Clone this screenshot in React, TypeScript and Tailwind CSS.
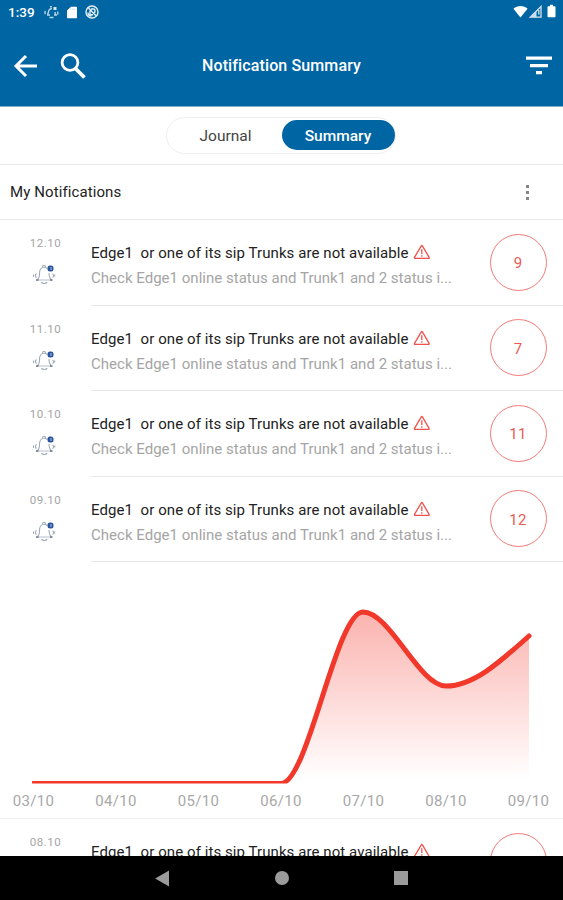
import React from 'react';

interface NotificationRowProps {
  date: string;
  count: string;
}

const notifications = [
  { date: '12.10', count: '9' },
  { date: '11.10', count: '7' },
  { date: '10.10', count: '11' },
  { date: '09.10', count: '12' },
];

const days = ['03/10', '04/10', '05/10', '06/10', '07/10', '08/10', '09/10'];

const BellIcon = () => (
  <svg width="24" height="22" viewBox="0 0 24 22" fill="none" stroke="#a3acba" strokeWidth="1.1">
    <path d="M5.500 16.500c1.800-1.300 2-2.500 2-6 0-4 2-6.200 4.500-6.200 1.500 0 2.500.5 3.200 1.300M17 10c0 3.500.2 5 2.300 6.500" />
    <path d="M10.500 4c0-2.300 3-2.300 3 0" />
    <path d="M5 17h15" strokeWidth="0.800" />
    <path d="M4 17h2.500M18 17h2.500" stroke="#65758e" strokeWidth="1.500" />
    <path d="M9.500 19c.5 2 5 2 5.500 0" strokeWidth="1.200" />
    <path d="M4.500 10.500c-1.500 1-1.500 3 0 4M1.500 11.500v2.500M20.500 11c1.500 1 1.500 2.500 0 3.500M22.700 11.500v2" />
    <rect x="15.500" y="2.500" width="6" height="6" rx="2.500" fill="#2a569f" stroke="none" />
    <path d="M19 4v3" stroke="#b9cbe9" strokeWidth="0.900" />
  </svg>
);

const WarningIcon = () => (
  <svg width="18" height="16" viewBox="0 0 18 16" fill="none" stroke="#f0524b" strokeWidth="1.300" strokeLinejoin="round">
    <path d="M8.300 1.800 1.500 13.300c-.3.600 0 1 .6 1h13.400c.6 0 .9-.4.600-1L9.400 1.800c-.4-.5-.8-.5-1.100 0Z" />
    <path d="M8.800 5.300v4.700M8.800 11.300v1.400" />
  </svg>
);

const StatusBar = () => (
  <div className="flex h-6 items-center justify-between pr-[7px] pl-2">
    <div className="flex items-center">
      <span className="w-9 text-[13.5px] font-medium">1:39</span>
      <svg width="15" height="14" viewBox="0 0 15 14" fill="none" stroke="#b9d5e8" strokeWidth="1.400">
        <path d="M3.500 9.500c1-1 .8-4 2-5 .7-.7 1.500-.8 2.500-.6M11 7c0 1.500.5 2.500 1 3M3 10h3M10 10h3M5.500 12.500h4M1.500 6c-.8 1-.8 2 0 3M13.500 6.500c.6 1 .5 2 0 3" />
        <path d="M6 1.800h2" />
        <rect x="9.500" y="2" width="3" height="3" fill="#d9e8f3" stroke="none" />
      </svg>
      <svg className="ml-[7px]" width="12" height="13" viewBox="0 0 12 13">
        <path d="M5 .8h5.200c.5 0 .8.300.8.800v9.800c0 .5-.3.800-.8.800H1.800c-.5 0-.8-.3-.8-.8V4.500Z" fill="#fff" />
        <path d="M4.800 2.500v1.500M6.800 2.500v1.500M8.800 2.500v1.500" stroke="#b3cfe2" strokeWidth="0.700" />
      </svg>
      <svg className="ml-[7px]" width="14" height="14" viewBox="0 0 14 14" fill="none" stroke="#e4eff6" strokeWidth="1.400">
        <circle cx="7" cy="7" r="6" />
        <path d="M3.500 3 11 10.800M5 9.500V5.500M5 9.800h3M6 4h2.500c2 0 2 3.500.5 3.700M3 7.500c0 2 1.500 3.500 3.500 3.500" />
      </svg>
    </div>
    <div className="-mt-[2px] flex items-center">
      <svg width="15" height="13" viewBox="0 0 15 13">
        <path d="M7.500 12.500.4 3.700C4.500.2 10.500.2 14.600 3.700Z" fill="#fff" />
      </svg>
      <svg className="ml-px" width="13" height="13" viewBox="0 0 13 13">
        <path d="M12 1.500v10.600H1.300Z" fill="none" stroke="#d7e6f1" strokeWidth="1.300" />
        <path d="M7.500 5.800v6.500H1Z" fill="#c9deec" />
        <path d="M9.800 5v4.500" stroke="#d7e6f1" strokeWidth="1.300" />
      </svg>
      <svg className="ml-[5px]" width="9" height="14" viewBox="0 0 9 14">
        <path d="M3 .8h3v1.500h1.500c.6 0 1 .4 1 1v8.900c0 .6-.4 1-1 1h-6c-.6 0-1-.4-1-1V3.300c0-.6.4-1 1-1H3Z" fill="#fff" />
      </svg>
    </div>
  </div>
);

const Header = () => (
  <header className="h-[107px] shrink-0 border-b border-[#86aecb] bg-[#0065a3] text-white">
    <StatusBar />
    <div className="grid h-[83px] grid-cols-[1fr_auto_1fr] items-center">
      <div className="flex items-center pl-[13px]">
        <svg width="25" height="24" viewBox="0 0 25 24" fill="none" stroke="#fff" strokeWidth="3">
          <path d="M24 12H3M13 2 3 12l10 10" />
        </svg>
        <svg className="ml-[22px]" width="26" height="26" viewBox="0 0 26 26" fill="none" stroke="#fff">
          <circle cx="10" cy="9.500" r="7.900" strokeWidth="2.800" />
          <path d="m15.500 15.500 9 9" strokeWidth="3.800" />
        </svg>
      </div>
      <h1 className="pt-px text-base font-medium tracking-[0.12px]">Notification Summary</h1>
      <div className="flex justify-end pr-[10px]">
        <svg width="28" height="19" viewBox="0 0 28 19" fill="#fff">
          <path d="M1 .5h26v3.300H1ZM5 8h18v3.200H5ZM11 15h6v3.300h-6Z" />
        </svg>
      </div>
    </div>
  </header>
);

const NotificationRow: React.FC<NotificationRowProps> = ({ date, count }) => (
  <div className="flex h-[85.5px] shrink-0">
    <div className="flex w-[91px] flex-col items-center pt-[15px]">
      <span className="text-[11.5px] leading-4 tracking-[0.5px] text-[#a5a5a5]">{date}</span>
      <div className="mt-[12px] mr-[4px]">
        <BellIcon />
      </div>
    </div>
    <div className="flex flex-1 items-start border-b border-[#e8e8e8]">
      <div className="flex-1 pt-[21px] whitespace-nowrap">
        <div className="flex items-center gap-1">
          <span className="text-[15px] leading-6 tracking-[0.075px] whitespace-pre text-[#222]">Edge1  or one of its sip Trunks are not available</span>
          <div className="-mt-[2px]">
            <WarningIcon />
          </div>
        </div>
        <p className="text-[15px] leading-[26px] tracking-[0.02px] text-[#a5a5a5]">Check Edge1 online status and Trunk1 and 2 status i...</p>
      </div>
      <div className="mt-[13.5px] mr-[16.5px] flex size-[57px] items-center justify-center rounded-full border border-[#f37c78] text-[15px] tracking-[0.3px] text-[#ec5b56]">
        <span className="mt-[3px]">{count}</span>
      </div>
    </div>
  </div>
);

const TrendChart = () => (
  <div className="flex h-[257px] shrink-0 flex-col border-b border-[#f0f0f0]">
    <svg width="563" height="222" viewBox="0 562 563 222">
      <defs>
        <linearGradient id="trend" x1="0" y1="612" x2="0" y2="780" gradientUnits="userSpaceOnUse">
          <stop offset="0" stopColor="#f4362b" stopOpacity="0.380" />
          <stop offset="1" stopColor="#f4362b" stopOpacity="0" />
        </linearGradient>
        <clipPath id="plot">
          <rect x="32" y="562" width="500" height="221.500" />
        </clipPath>
      </defs>
      <g clipPath="url(#plot)">
        <path d="M281 783C308 783 336 612 363 612S419 686 446 686C474 686 501 661 529 636V783Z" fill="url(#trend)" />
        <path
          d="M33 783.500H281C308 783.500 336 612 363 612S419 686 446 686C474 686 501 661 529 636"
          fill="none"
          stroke="#f1382b"
          strokeWidth="5"
          strokeLinecap="round"
        />
      </g>
    </svg>
    <div className="-mx-2 flex justify-between pr-[6px] pl-[5px]">
      {days.map((day) => (
        <span key={day} className="w-[73px] text-center text-[15px] leading-[34px] tracking-[0.3px] text-[#a8a8a8]">{day}</span>
      ))}
    </div>
  </div>
);

const NavigationBar = () => (
  <nav className="flex h-11 shrink-0 items-center justify-center gap-[105px] bg-black">
    <svg width="15" height="17" viewBox="0 0 15 17" fill="#9b9b9b">
      <path d="M14 .500v16L.2 8.500Z" />
    </svg>
    <div className="size-[14px] rounded-full bg-[#9b9b9b]" />
    <div className="size-[14px] bg-[#9b9b9b]" />
  </nav>
);

export default function App() {
  return (
    <div className="flex h-[900px] w-[563px] flex-col overflow-hidden bg-white font-['Roboto',sans-serif]">
      <Header />

      {/* View switch */}
      <div className="flex h-[58px] shrink-0 items-center justify-center border-b border-[#e8e8e8]">
        <div className="mr-[2px] flex h-[37px] w-[230px] items-center rounded-full border border-[#efefef] text-[15.5px] -mt-px">
          <button className="h-full flex-1 pt-[3px] pl-[3px] text-[#444]">Journal</button>
          <button className="h-[30px] w-[113px] rounded-full bg-[#0065a3] pt-[3px] font-medium text-white">Summary</button>
        </div>
      </div>

      <div className="flex h-[55px] shrink-0 items-center justify-between border-b border-[#e8e8e8] pr-[34px] pl-[10px]">
        <h2 className="pt-px text-[15px] tracking-[0.1px] text-[#222]">My Notifications</h2>
        <div className="flex flex-col gap-[3px]">
          <span className="size-[3px] bg-[#858585]" />
          <span className="size-[3px] bg-[#858585]" />
          <span className="size-[3px] bg-[#858585]" />
        </div>
      </div>

      <main className="flex min-h-0 flex-1 flex-col overflow-hidden">
        {notifications.map((item) => (
          <NotificationRow key={item.date} date={item.date} count={item.count} />
        ))}
        <TrendChart />
        <NotificationRow date="08.10" count="8" />
      </main>

      <NavigationBar />
    </div>
  );
}
